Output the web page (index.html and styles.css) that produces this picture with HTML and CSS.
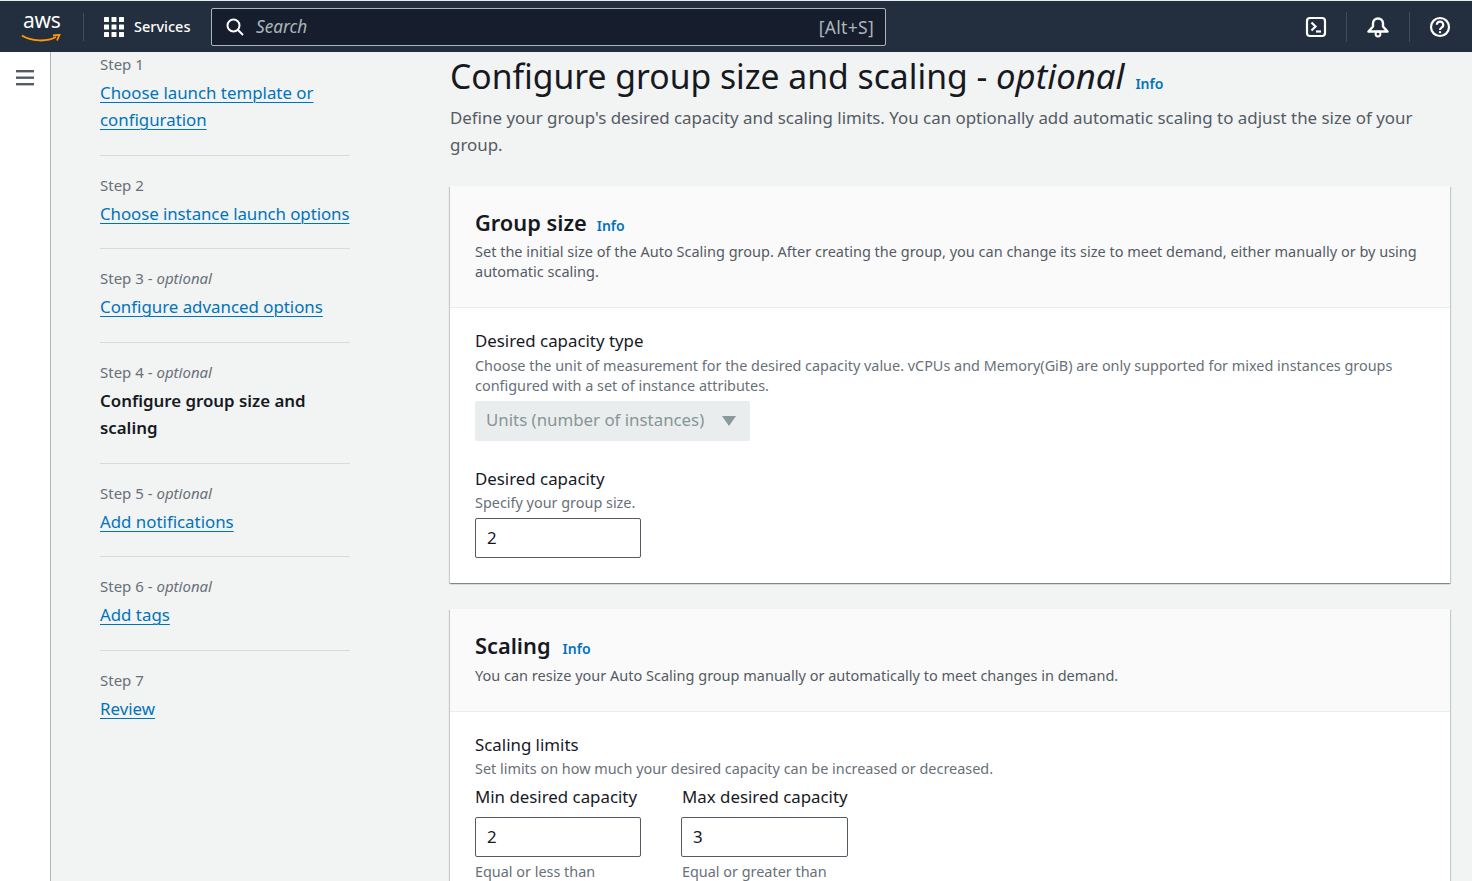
FILE: index.html
```html
<!DOCTYPE html>
<html lang="en">
<head>
<meta charset="utf-8">
<title>Configure group size and scaling</title>
<link rel="stylesheet" href="styles.css">
</head>
<body>
<header class="topbar">
  <div class="logo">
    <span class="logo-text">aws</span>
    <svg class="smile" width="40" height="9" viewBox="0 0 40 9"><path d="M1 1.500C10 7.500 26 8 35 3" fill="none" stroke="#ff9900" stroke-width="2"/><path d="M32 1.500L38.500 .8L36 6.500" fill="none" stroke="#ff9900" stroke-width="1.800"/></svg>
  </div>
  <span class="bar-sep"></span>
  <svg class="grid-icon" width="22" height="22" viewBox="0 0 22 22" fill="#fff"><rect x="1" y="1" width="5" height="5" rx=".6"/><rect x="8.500" y="1" width="5" height="5" rx=".6"/><rect x="16" y="1" width="5" height="5" rx=".6"/><rect x="1" y="8.500" width="5" height="5" rx=".6"/><rect x="8.500" y="8.500" width="5" height="5" rx=".6"/><rect x="16" y="8.500" width="5" height="5" rx=".6"/><rect x="1" y="16" width="5" height="5" rx=".6"/><rect x="8.500" y="16" width="5" height="5" rx=".6"/><rect x="16" y="16" width="5" height="5" rx=".6"/></svg>
  <span class="services">Services</span>
  <div class="search">
    <svg width="20" height="20" viewBox="0 0 20 20" fill="none" stroke="#fff" stroke-width="2"><circle cx="8.500" cy="8.500" r="6"/><path d="M13 13l5 5"/></svg>
    <span class="search-text">Search</span>
    <span class="search-key">[Alt+S]</span>
  </div>
  <div class="bar-icons">
    <span class="bar-icon first"><svg width="22" height="22" viewBox="0 0 22 22" fill="none" stroke="#fff" stroke-width="2.200"><rect x="2" y="2" width="18" height="18" rx="3"/><path d="M6.500 6.500L10.500 10.500L6.500 14.500"/><path d="M11 15.500h5"/></svg></span>
    <span class="bar-icon second"><svg width="22" height="22" viewBox="0 0 22 22" fill="none" stroke="#fff" stroke-width="2.400"><path d="M1.500 15.500h19L16 10.500V7.500a5 5 0 0 0-10 0v3Z" stroke-linejoin="round"/><circle cx="11" cy="18" r="2.400" stroke-width="2"/></svg></span>
    <span class="bar-icon third"><svg width="22" height="22" viewBox="0 0 22 22" fill="none" stroke="#fff" stroke-width="2.200"><circle cx="11" cy="11" r="9"/><path d="M7.800 8.800a3.200 3.200 0 1 1 4.700 2.800c-1 .6-1.500 1.100-1.500 2.400"/><path d="M11 15.200v2"/></svg></span>
  </div>
</header>
<div class="shell">
  <aside class="rail">
    <svg width="18" height="16" viewBox="0 0 18 16" fill="#545b64"><rect y="0" width="18" height="2.400"/><rect y="6.500" width="18" height="2.400"/><rect y="13" width="18" height="2.400"/></svg>
  </aside>
  <nav class="steps">
    <div class="step"><div class="step-label">Step 1</div><a class="step-link" href="#">Choose launch template or configuration</a></div>
    <div class="step"><div class="step-label">Step 2</div><a class="step-link step-link-single" href="#">Choose instance launch options</a></div>
    <div class="step"><div class="step-label">Step 3 - <i>optional</i></div><a class="step-link" href="#">Configure advanced options</a></div>
    <div class="step"><div class="step-label">Step 4 - <i>optional</i></div><span class="step-current">Configure group size and scaling</span></div>
    <div class="step"><div class="step-label">Step 5 - <i>optional</i></div><a class="step-link" href="#">Add notifications</a></div>
    <div class="step"><div class="step-label">Step 6 - <i>optional</i></div><a class="step-link" href="#">Add tags</a></div>
    <div class="step"><div class="step-label">Step 7</div><a class="step-link" href="#">Review</a></div>
  </nav>
  <main class="content">
    <div class="page-head">
      <h1 class="page-title">Configure group size and scaling - <i>optional</i><a class="info info-page" href="#">Info</a></h1>
      <p class="page-desc">Define your group's desired capacity and scaling limits. You can optionally add automatic scaling to adjust the size of your group.</p>
    </div>
    <section class="card">
      <div class="card-head">
        <h2 class="card-title">Group size<a class="info" href="#">Info</a></h2>
        <p class="hint hint-raised">Set the initial size of the Auto Scaling group. After creating the group, you can change its size to meet demand, either manually or by using automatic scaling.</p>
      </div>
      <div class="card-body">
        <div class="label">Desired capacity type</div>
        <p class="hint hint-gap">Choose the unit of measurement for the desired capacity value. vCPUs and Memory(GiB) are only supported for mixed instances groups configured with a set of instance attributes.</p>
        <div class="select"><span class="select-text">Units (number of instances)</span><svg width="14" height="10" viewBox="0 0 14 10" fill="#8a9a9b"><path d="M0 0h14L7 10Z"/></svg></div>
        <div class="label label-gap">Desired capacity</div>
        <p class="hint hint-tight">Specify your group size.</p>
        <div class="input input-top">2</div>
      </div>
    </section>
    <section class="card">
      <div class="card-head card-head-short">
        <h2 class="card-title">Scaling<a class="info info-wide" href="#">Info</a></h2>
        <p class="hint">You can resize your Auto Scaling group manually or automatically to meet changes in demand.</p>
      </div>
      <div class="card-body">
        <div class="label">Scaling limits</div>
        <p class="hint hint-tight">Set limits on how much your desired capacity can be increased or decreased.</p>
        <div class="limits">
          <div class="limit"><div class="label">Min desired capacity</div><div class="input">2</div><p class="hint limit-hint">Equal or less than</p></div>
          <div class="limit limit-second"><div class="label">Max desired capacity</div><div class="input input-wide">3</div><p class="hint limit-hint">Equal or greater than</p></div>
        </div>
      </div>
    </section>
  </main>
</div>
</body>
</html>
```
FILE: styles.css
```css
* { box-sizing: border-box; }
html, body { margin: 0; height: 881px; overflow: hidden; }
body { font-family: "Noto Sans", sans-serif; color: #16191f; background: #f2f3f3; display: flex; flex-direction: column; }
p, h1, h2 { margin: 0; }

.topbar { height: 52px; flex: none; background: #232f3e; border-top: 1px solid #eaeded; display: flex; align-items: center; color: #fff; }
.logo { width: 83px; height: 38px; flex: none; position: relative; }
.logo-text { position: absolute; left: 23px; top: -3px; font-size: 21px; line-height: 30px; letter-spacing: -.3px; color: #fff; }
.smile { position: absolute; left: 21px; top: 26px; }
.bar-sep { width: 1px; height: 28px; background: #414d5c; flex: none; }
.grid-icon { margin-left: 19px; flex: none; }
.services { margin-left: 9px; width: 77px; padding-bottom: 2px; font-size: 14.500px; font-weight: 500; flex: none; }
.search { width: 675px; height: 38px; flex: none; background: #161e2d; border: 1px solid #aab7b8; border-radius: 2px; display: flex; align-items: center; padding: 0 11px 0 13px; }
.search-text { margin-left: 11px; font-size: 17.200px; font-style: italic; color: #aab7b8; }
.search-key { margin-left: auto; font-size: 17.500px; letter-spacing: .3px; color: #aab7b8; }
.bar-icons { display: flex; margin-left: auto; align-items: center; height: 30px; padding-right: 2px; }
.bar-icon { height: 30px; display: flex; align-items: center; justify-content: center; }
.bar-icon.first { width: 62px; padding-left: 2px; }
.bar-icon.second { width: 64px; border-left: 1px solid #414d5c; border-right: 1px solid #414d5c; }
.bar-icon.third { width: 60px; }

.shell { flex: 1; display: flex; min-height: 0; }
.rail { width: 51px; flex: none; background: #fff; border-right: 1px solid #aab7b8; padding: 17px 0 0 16px; }
.steps { width: 250px; margin-left: 49px; flex: none; }
.step { border-bottom: 1px solid #d5dbdb; padding: 20px 0 21.700px; }
.step:first-child { padding-top: 3px; }
.step:last-child { border-bottom: 0; }
.step-label { font-size: 15px; line-height: 18px; margin-bottom: 6px; color: #687078; white-space: nowrap; }
.step-link { font-size: 16.850px; line-height: 27px; color: #0073bb; text-decoration: underline; text-underline-offset: 3px; text-decoration-thickness: 1px; }
.step-link-single { white-space: nowrap; letter-spacing: -.06px; }
.step-current { display: block; font-size: 16.850px; line-height: 27px; font-weight: 600; }

.content { width: 1000px; margin-left: 100px; flex: none; }
.page-head { height: 134px; }
.page-title { font-size: 33.700px; line-height: 48px; font-weight: 400; margin-bottom: -4px; }
.page-title i { font-size: 34.700px; }
.page-desc { font-size: 16.900px; line-height: 27px; color: #545b64; }
.info { font-size: 14px; font-weight: 600; color: #0073bb; text-decoration: none; margin-left: 10px; }
.info-page { margin-left: 11px; }
.info-wide { margin-left: 12px; }

.card { background: #fff; box-shadow: 0 1px 1px 0 rgba(0,28,36,.3), 1px 1px 1px 0 rgba(0,28,36,.15), -1px 1px 1px 0 rgba(0,28,36,.15); margin-bottom: 26px; }
.card-head { background: #fafafa; border-bottom: 1px solid #eaeded; height: 122px; padding: 21px 25px 0; }
.card-head-short { height: 103px; }
.card-title { font-size: 21.800px; line-height: 32px; font-weight: 600; }
.hint { font-size: 14.420px; line-height: 20px; color: #687078; }
.card-head .hint { font-size: 14.500px; color: #545b64; }
.card-head .hint-raised { margin-top: -1px; }
.hint-gap { margin-top: 4px; }
.hint-tight { margin-top: 3px; }
.card-body { padding: 21px 25px 25px; }
.label { font-size: 16.850px; line-height: 23px; }
.label-gap { margin-top: 26px; }
.select { width: 275px; height: 40px; margin-top: 5px; background: #eaeded; border-radius: 2px; display: flex; align-items: center; justify-content: space-between; padding: 0 14px 0 11px; font-size: 16.850px; color: #879596; }
.select-text { padding-bottom: 3px; }
.input { width: 166px; height: 40px; background: #fff; border: 1px solid #545b64; border-radius: 2px; padding-left: 11px; font-size: 16.850px; line-height: 38px; }
.input-wide { width: 167px; }
.input-top { margin-top: 5px; }
.limits { display: flex; gap: 40px; margin-top: 6px; }
.limit .label { margin-bottom: 9px; }
.limit-second .label, .limit-second .limit-hint { padding-left: 1px; }
.limit-hint { margin-top: 5px; }
```
